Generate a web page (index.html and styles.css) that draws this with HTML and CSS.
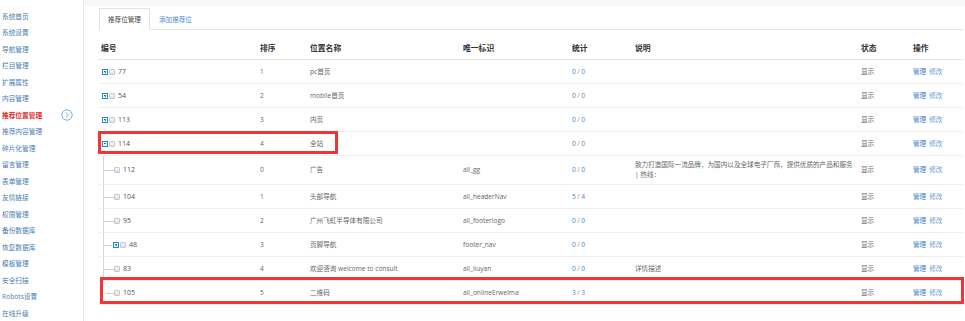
FILE: index.html
```html
<!DOCTYPE html>
<html lang="zh-CN">
<head>
<meta charset="utf-8">
<title>推荐位置管理</title>
<link rel="stylesheet" href="styles.css">
</head>
<body>
<div class="page">
  <aside class="side">
    <a class="side-item">系统首页</a>
    <a class="side-item">系统设置</a>
    <a class="side-item">导航管理</a>
    <a class="side-item">栏目管理</a>
    <a class="side-item">扩展属性</a>
    <a class="side-item">内容管理</a>
    <a class="side-item active">推荐位置管理
      <svg class="side-arrow" width="12" height="12" viewBox="0 0 12 12"><circle cx="6" cy="6" r="5.2" fill="none" stroke="#6aa6d8" stroke-width="0.9"/><path d="M5 3.6 L7.3 6 L5 8.4" fill="none" stroke="#6aa6d8" stroke-width="0.9"/></svg>
    </a>
    <a class="side-item">推荐内容管理</a>
    <a class="side-item">碎片化管理</a>
    <a class="side-item">留言管理</a>
    <a class="side-item">表单管理</a>
    <a class="side-item">友情链接</a>
    <a class="side-item">权限管理</a>
    <a class="side-item">备份数据库</a>
    <a class="side-item">恢复数据库</a>
    <a class="side-item">模板管理</a>
    <a class="side-item">安全扫描</a>
    <a class="side-item">Robots设置</a>
    <a class="side-item">在线升级</a>
  </aside>

  <main class="main">
    <div class="tabs">
      <span class="tab active">推荐位管理</span>
      <span class="tab">添加推荐位</span>
    </div>

    <div class="table">
      <div class="row head">
        <div class="cell">编号</div>
        <div class="cell">排序</div>
        <div class="cell">位置名称</div>
        <div class="cell">唯一标识</div>
        <div class="cell">统计</div>
        <div class="cell">说明</div>
        <div class="cell">状态</div>
        <div class="cell">操作</div>
      </div>

      <div class="row">
        <div class="cell id"><span class="tog plus"></span><span class="chk"></span><span class="num">77</span></div>
        <div class="cell">1</div>
        <div class="cell">pc首页</div>
        <div class="cell"></div>
        <div class="cell stat"><b>0</b> / <b>0</b></div>
        <div class="cell"></div>
        <div class="cell">显示</div>
        <div class="cell ops"><a>管理</a> <a class="lt">修改</a></div>
      </div>

      <div class="row">
        <div class="cell id"><span class="tog plus"></span><span class="chk"></span><span class="num">54</span></div>
        <div class="cell">2</div>
        <div class="cell">mobile首页</div>
        <div class="cell"></div>
        <div class="cell stat"><b>0</b> / <b>0</b></div>
        <div class="cell"></div>
        <div class="cell">显示</div>
        <div class="cell ops"><a>管理</a> <a class="lt">修改</a></div>
      </div>

      <div class="row">
        <div class="cell id"><span class="tog plus"></span><span class="chk"></span><span class="num">113</span></div>
        <div class="cell">3</div>
        <div class="cell">内页</div>
        <div class="cell"></div>
        <div class="cell stat"><b>0</b> / <b>0</b></div>
        <div class="cell"></div>
        <div class="cell">显示</div>
        <div class="cell ops"><a>管理</a> <a class="lt">修改</a></div>
      </div>

      <div class="row">
        <div class="cell id"><span class="tog minus"></span><span class="chk"></span><span class="num">114</span></div>
        <div class="cell">4</div>
        <div class="cell">全站</div>
        <div class="cell"></div>
        <div class="cell stat"><b>0</b> / <b>0</b></div>
        <div class="cell"></div>
        <div class="cell">显示</div>
        <div class="cell ops"><a>管理</a> <a class="lt">修改</a></div>
      </div>

      <div class="row">
        <div class="cell id child"><span class="tree"></span><span class="chk"></span><span class="num">112</span></div>
        <div class="cell">0</div>
        <div class="cell">广告</div>
        <div class="cell">all_gg</div>
        <div class="cell stat"><b>0</b> / <b>0</b></div>
        <div class="cell desc">致力打造国际一流品牌，为国内以及全球电子厂商，提供优质的产品和服务 | 热线：</div>
        <div class="cell">显示</div>
        <div class="cell ops"><a>管理</a> <a class="lt">修改</a></div>
      </div>

      <div class="row">
        <div class="cell id child"><span class="tree"></span><span class="chk"></span><span class="num">104</span></div>
        <div class="cell">1</div>
        <div class="cell">头部导航</div>
        <div class="cell">all_headerNav</div>
        <div class="cell stat"><b>5</b> / <b>4</b></div>
        <div class="cell"></div>
        <div class="cell">显示</div>
        <div class="cell ops"><a>管理</a> <a class="lt">修改</a></div>
      </div>

      <div class="row">
        <div class="cell id child"><span class="tree"></span><span class="chk"></span><span class="num">95</span></div>
        <div class="cell">2</div>
        <div class="cell">广州飞虹半导体有限公司</div>
        <div class="cell">all_footerlogo</div>
        <div class="cell stat"><b>0</b> / <b>0</b></div>
        <div class="cell"></div>
        <div class="cell">显示</div>
        <div class="cell ops"><a>管理</a> <a class="lt">修改</a></div>
      </div>

      <div class="row">
        <div class="cell id child"><span class="tree short"></span><span class="tog plus"></span><span class="chk"></span><span class="num">48</span></div>
        <div class="cell">3</div>
        <div class="cell">页脚导航</div>
        <div class="cell">footer_nav</div>
        <div class="cell stat"><b>0</b> / <b>0</b></div>
        <div class="cell"></div>
        <div class="cell">显示</div>
        <div class="cell ops"><a>管理</a> <a class="lt">修改</a></div>
      </div>

      <div class="row">
        <div class="cell id child"><span class="tree"></span><span class="chk"></span><span class="num">83</span></div>
        <div class="cell">4</div>
        <div class="cell">欢迎咨询 welcome to consult</div>
        <div class="cell">all_liuyan</div>
        <div class="cell stat"><b>0</b> / <b>0</b></div>
        <div class="cell">详情描述</div>
        <div class="cell">显示</div>
        <div class="cell ops"><a>管理</a> <a class="lt">修改</a></div>
      </div>

      <div class="row">
        <div class="cell id child last"><span class="tree"></span><span class="chk"></span><span class="num">105</span></div>
        <div class="cell">5</div>
        <div class="cell">二维码</div>
        <div class="cell">all_onlineErweima</div>
        <div class="cell stat"><b>3</b> / <b>3</b></div>
        <div class="cell"></div>
        <div class="cell">显示</div>
        <div class="cell ops"><a>管理</a> <a class="lt">修改</a></div>
      </div>

      <div class="mark mark-a"></div>
      <div class="mark mark-b"></div>
    </div>
  </main>
</div>
</body>
</html>
```

FILE: styles.css
```css
* { box-sizing: border-box; }

html, body {
  margin: 0;
  padding: 0;
  background: #fff;
}

body {
  font-family: "Open Sans", "Noto Sans CJK SC", sans-serif;
  font-size: 6.6px;
  color: #666;
}

.page {
  display: flex;
  width: 965px;
  height: 321px;
  overflow: hidden;
}

/* ---------- sidebar ---------- */
.side {
  width: 84px;
  flex: none;
  border-right: 1px solid #ebebeb;
  padding: 7.7px 0 0 2px;
  display: flex;
  flex-direction: column;
}

.side-item {
  display: flex;
  align-items: center;
  height: 16.6px;
  font-size: 6.7px;
  color: #4c7eaf;
  white-space: nowrap;
}

.side-item.active {
  color: #e5262d;
  font-weight: bold;
}

.side-arrow {
  margin-left: auto;
  margin-right: 10px;
}

/* ---------- main ---------- */
.main {
  flex: 1;
  padding: 8px 2px 0 14px;
  background: linear-gradient(#f8f8f8 0, #f8f8f8 6px, #fff 6px);
}

.tabs {
  display: flex;
  height: 22px;
  border-bottom: 1px solid #e6e6e6;
  padding-left: 1px;
}

.tab {
  display: flex;
  align-items: center;
  height: 22px;
  padding: 0 9px;
  color: #4a8bd0;
}

.tab.active {
  color: #444;
  background: #fff;
  border: 1px solid #e3e3e3;
  border-bottom-color: #fff;
  padding: 0 8px;
}

/* ---------- table ---------- */
.table {
  position: relative;
  width: 865px;
  margin-top: 7px;
}

.row {
  display: grid;
  grid-template-columns: 159px 50px 153px 109px 63px 226px 52px 53px;
  min-height: 24px;
  border-bottom: 1px solid #f0f0f0;
}

.row.head {
  min-height: 23px;
  border-bottom-color: #e8e8e8;
}

.row.head .cell {
  font-size: 7.8px;
  font-weight: bold;
  color: #333;
}

.cell {
  display: flex;
  align-items: center;
  padding: 4px 0 4px 3px;
  line-height: 10px;
  white-space: nowrap;
}

.cell.desc {
  white-space: normal;
  display: block;
  width: 222px;
  align-self: center;
}

.id {
  position: relative;
  color: #555;
  font-size: 7px;
}

.num { margin-left: 3px; }

.tog {
  position: relative;
  width: 6px;
  height: 6px;
  border: 1px solid #2b8cc4;
  background: #e8f4fb;
  margin-left: 1px;
  margin-right: 1px;
  flex: none;
}

.tog::before {
  content: "";
  position: absolute;
  left: 1px;
  top: 1.5px;
  width: 2px;
  height: 1px;
  background: #1f7db8;
}

.tog.plus::after {
  content: "";
  position: absolute;
  left: 1.5px;
  top: 1px;
  width: 1px;
  height: 2px;
  background: #1f7db8;
}

.chk {
  width: 6px;
  height: 6px;
  border: 1px solid #c9c9c9;
  border-radius: 1px;
  background: linear-gradient(#f6f6f6, #e2e2e2);
  flex: none;
}

/* tree connectors */
.child { padding-left: 5px; }

.tree {
  align-self: stretch;
  width: 10px;
  margin: -4px 1px -4px 0;
  border-left: 1px solid #d4d4d4;
  position: relative;
  flex: none;
}

.tree::after {
  content: "";
  position: absolute;
  left: 0;
  top: 50%;
  width: 10px;
  border-top: 1px solid #cfcfcf;
}

.tree.short { width: 8px; }
.tree.short::after { width: 8px; }

.last .tree {
  border-left-color: transparent;
}

.last .tree::after {
  left: 2px;
  width: 8px;
}

.stat { color: #8a8a8a; }
.stat b {
  font-weight: normal;
  color: #4c86c0;
  margin: 0 1.5px;
}
.stat b:first-child { margin-left: 0; }

.ops a {
  color: #3b82c4;
  margin-right: 3px;
}
.ops a.lt { color: #6a9fd0; }

/* red annotation boxes */
.mark {
  position: absolute;
  border: 3px solid #ef3535;
  pointer-events: none;
}

.mark-a {
  left: 0;
  top: 94px;
  width: 240px;
  height: 23px;
}

.mark-b {
  left: 2px;
  top: 240px;
  width: 864px;
  height: 27px;
}
```
